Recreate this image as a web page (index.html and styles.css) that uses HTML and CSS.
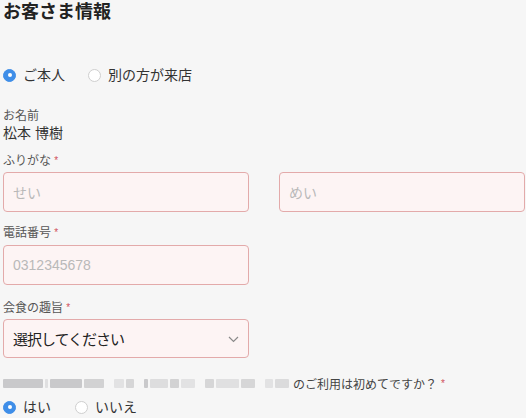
FILE: index.html
```html
<!DOCTYPE html>
<html lang="ja">
<head>
<meta charset="utf-8">
<link rel="stylesheet" href="styles.css">
</head>
<body>
<div class="page">
  <h1 class="title">お客さま情報</h1>

  <div class="radios radios-top">
    <label class="radio"><span class="dot checked"></span><span>ご本人</span></label>
    <label class="radio"><span class="dot"></span><span>別の方が来店</span></label>
  </div>

  <div class="label label-name">お名前</div>
  <div class="value">松本 博樹</div>

  <div class="label label-kana">ふりがな <span class="req">*</span></div>
  <div class="row">
    <div class="input"><span class="ph">せい</span></div>
    <div class="input"><span class="ph">めい</span></div>
  </div>

  <div class="label label-tel">電話番号 <span class="req">*</span></div>
  <div class="input tel"><span class="ph num">0312345678</span></div>

  <div class="label label-purpose">会食の趣旨 <span class="req">*</span></div>
  <div class="select">
    <span class="sel-text">選択してください</span>
    <svg class="chev" width="11" height="7" viewBox="0 0 11 7"><path d="M1 1 L5.5 5.5 L10 1" fill="none" stroke="#8a8a8a" stroke-width="1.2"/></svg>
  </div>

  <div class="question">
    <span class="blur">
      <i style="width:40px"></i><i style="width:4px;opacity:.5"></i><i style="width:32px"></i><i style="width:20px;opacity:.8"></i><b></b><i style="width:10px;opacity:.45"></i><i style="width:8px;opacity:.7"></i><b></b><i style="width:5px"></i><i style="width:18px;opacity:.55"></i><i style="width:9px;opacity:.8"></i><i style="width:14px;opacity:.45"></i><b></b><i style="width:9px;opacity:.7"></i><i style="width:24px;opacity:.5"></i><i style="width:14px;opacity:.7"></i><b></b><i style="width:8px;opacity:.45"></i><i style="width:14px;opacity:.6"></i>
    </span>
    <span class="q-text">のご利用は初めてですか？</span> <span class="req">*</span>
  </div>

  <div class="radios radios-q">
    <label class="radio"><span class="dot checked"></span><span>はい</span></label>
    <label class="radio"><span class="dot"></span><span>いいえ</span></label>
  </div>
</div>
</body>
</html>
```
FILE: styles.css
```css
* { box-sizing: border-box; }
html, body {
  margin: 0;
  background: #f6f6f6;
}
body {
  font-family: "Liberation Sans", "Noto Sans CJK JP", sans-serif;
  color: #333;
}
.page {
  padding: 0 0 0 3px;
  width: 526px;
}
.title {
  margin: 0;
  font-size: 18px;
  line-height: 24px;
  font-weight: bold;
  color: #222;
}
.radios {
  display: flex;
  align-items: center;
  height: 20px;
}
.radios-top { margin-top: 41px; gap: 23px; }
.radios-q { margin-top: 6px; gap: 24px; }
.radio {
  display: flex;
  align-items: center;
  gap: 7px;
  font-size: 14px;
  line-height: 20px;
  color: #333;
}
.dot {
  width: 13px;
  height: 13px;
  border-radius: 50%;
  border: 1px solid #cfcfcf;
  background: #fff;
  display: inline-block;
  position: relative;
}
.dot.checked {
  background: #3f8ee8;
  border-color: #3f8ee8;
}
.dot.checked::after {
  content: "";
  position: absolute;
  left: 3.5px;
  top: 3.5px;
  width: 4px;
  height: 4px;
  border-radius: 50%;
  background: #fff;
}
.label {
  font-size: 12px;
  line-height: 16px;
  color: #555;
}
.label-name { margin-top: 23px; }
.value {
  font-size: 14px;
  line-height: 18px;
  color: #333;
}
.label-kana { margin-top: 11px; }
.label-tel { margin-top: 13px; }
.label-purpose { margin-top: 15px; }
.req {
  color: #d0505a;
  font-size: 10px;
  vertical-align: 1px;
}
.row {
  display: flex;
  gap: 30px;
  margin-top: 3px;
}
.input {
  width: 246px;
  height: 40px;
  border: 1px solid #e3aaaa;
  border-radius: 4px;
  background: #fdf4f4;
  display: flex;
  align-items: center;
  padding-left: 9px;
}
.input.tel { margin-top: 4px; }
.ph {
  font-size: 14px;
  color: #b9b9b9;
}
.select {
  margin-top: 3px;
  width: 246px;
  height: 39px;
  border: 1px solid #e3aaaa;
  border-radius: 4px;
  background: #fdf4f4;
  display: flex;
  align-items: center;
  justify-content: space-between;
  padding: 0 9px 0 9px;
}
.sel-text {
  font-size: 15px;
  letter-spacing: -1px;
  color: #222;
}
.chev { margin-top: 1px; }
.question {
  margin-top: 17px;
  display: flex;
  align-items: center;
  height: 16px;
  font-size: 12px;
  color: #444;
}
.blur {
  display: flex;
  align-items: center;
  gap: 2px;
  width: 286px;
  margin-right: 4px;
}
.blur i {
  display: block;
  height: 9px;
  background: #c9c9cb;
  border-radius: 1px;
}
.blur b {
  display: block;
  width: 6px;
}
.q-text { margin-right: 4px; }
```
